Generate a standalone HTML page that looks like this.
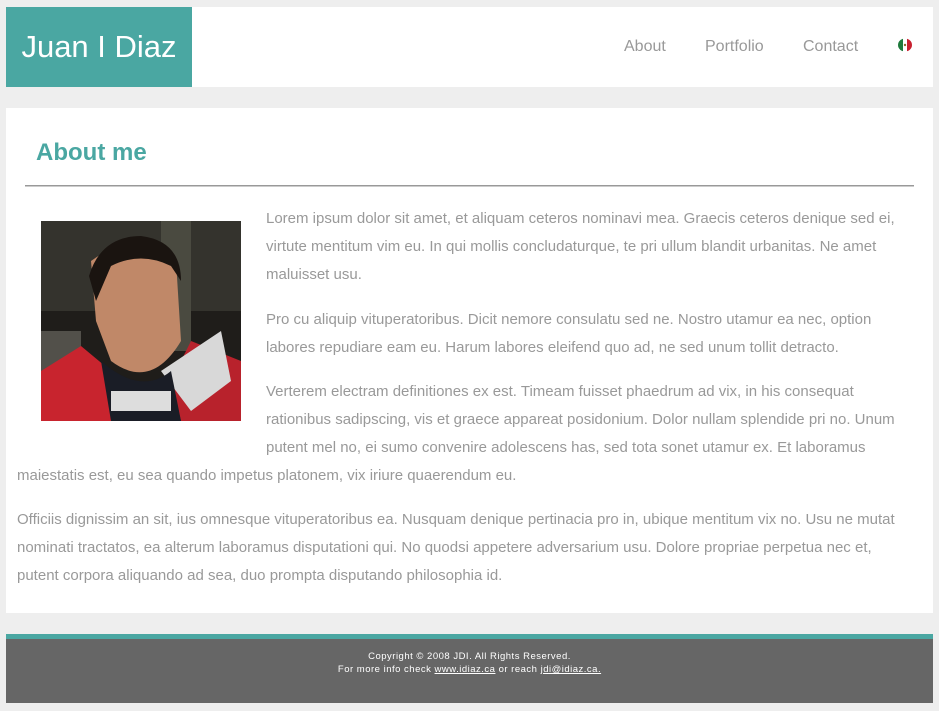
<!DOCTYPE html>
<html><head><meta charset="utf-8"><style>
body{margin:0;background:#eeeeee;width:939px;height:711px;position:relative;overflow:hidden;font-family:"Liberation Sans",Arial,sans-serif}
.a{position:absolute}
#hdr{left:6px;top:7px;width:927px;height:80px;background:#fff}
#logo{left:6px;top:7px;width:186px;height:80px;background:#4aa7a2;color:#fff;font-size:31px;line-height:80px;text-align:center}
.nav{top:38px;font-size:16px;color:#999;line-height:18px}
#main{left:6px;top:108px;width:927px;height:505px;background:#fff}
h1{position:absolute;left:36px;top:139px;margin:0;font-size:24px;color:#4aa7a2;line-height:28px}
#hr{left:25px;top:185px;width:889px;height:1px;background:#999;border-bottom:1px solid #ccc}
.l{position:absolute;font-size:15px;color:#999;white-space:nowrap;line-height:20px}
#bar{left:6px;top:634px;width:927px;height:5px;background:#4aa7a2}
#ft{left:6px;top:639px;width:927px;height:64px;background:#666;color:#fff;font-size:9.5px;text-align:center;letter-spacing:.5px}
#ft a{color:#fff;text-decoration:underline}
</style></head><body>
<div class="a" id="hdr"></div>
<div class="a" id="logo">Juan I Diaz</div>
<div class="a nav" style="left:624px">About</div>
<div class="a nav" style="left:705px">Portfolio</div>
<div class="a nav" style="left:803px">Contact</div>
<svg class="a" style="left:897px;top:38px" width="16" height="14" viewBox="0 0 16 14"><defs><clipPath id="c"><ellipse cx="8" cy="7" rx="7" ry="6.5"/></clipPath></defs><g clip-path="url(#c)"><rect x="0" y="0" width="6" height="14" fill="#1e7a3c"/><rect x="6" y="0" width="4" height="14" fill="#fff"/><rect x="10" y="0" width="6" height="14" fill="#c8202f"/><circle cx="8" cy="7" r="1.2" fill="#8a6a2a"/></g></svg>
<div class="a" id="main"></div>
<h1>About me</h1>
<div class="a" id="hr"></div>
<svg class="a" style="left:41px;top:221px" width="200" height="200" viewBox="0 0 200 200">
<rect width="200" height="200" fill="#1f1d1a"/>
<rect x="0" y="0" width="200" height="90" fill="#34332d"/>
<rect x="120" y="0" width="30" height="130" fill="#4a4a40"/>
<rect x="0" y="110" width="40" height="50" fill="#52504a"/>
<path d="M0 150 L40 125 L70 150 L80 200 L0 200Z" fill="#c8242e"/>
<path d="M200 140 L150 120 L130 160 L140 200 L200 200Z" fill="#b8222c"/>
<path d="M120 150 L180 110 L190 160 L150 190Z" fill="#d8d8d8"/>
<path d="M60 140 Q100 175 130 150 L140 200 L70 200Z" fill="#1a1d26"/>
<path d="M50 40 Q90 10 135 40 L140 120 Q110 170 70 140 L55 100Z" fill="#c08868"/>
<path d="M48 55 Q60 15 100 15 Q140 20 140 60 L130 45 Q100 30 70 45 L55 80Z" fill="#1a1410"/>
<rect x="70" y="170" width="60" height="20" fill="#ddd"/>
</svg>
<div class="l" style="left:266px;top:209px">Lorem ipsum dolor sit amet, et aliquam ceteros nominavi mea. Graecis ceteros denique sed ei,</div>
<div class="l" style="left:266px;top:237px">virtute mentitum vim eu. In qui mollis concludaturque, te pri ullum blandit urbanitas. Ne amet</div>
<div class="l" style="left:266px;top:265px">maluisset usu.</div>
<div class="l" style="left:266px;top:310px">Pro cu aliquip vituperatoribus. Dicit nemore consulatu sed ne. Nostro utamur ea nec, option</div>
<div class="l" style="left:266px;top:338px">labores repudiare eam eu. Harum labores eleifend quo ad, ne sed unum tollit detracto.</div>
<div class="l" style="left:266px;top:382px">Verterem electram definitiones ex est. Timeam fuisset phaedrum ad vix, in his consequat</div>
<div class="l" style="left:266px;top:410px">rationibus sadipscing, vis et graece appareat posidonium. Dolor nullam splendide pri no. Unum</div>
<div class="l" style="left:266px;top:438px">putent mel no, ei sumo convenire adolescens has, sed tota sonet utamur ex. Et laboramus</div>
<div class="l" style="left:17px;top:466px">maiestatis est, eu sea quando impetus platonem, vix iriure quaerendum eu.</div>
<div class="l" style="left:17px;top:510px">Officiis dignissim an sit, ius omnesque vituperatoribus ea. Nusquam denique pertinacia pro in, ubique mentitum vix no. Usu ne mutat</div>
<div class="l" style="left:17px;top:538px">nominati tractatos, ea alterum laboramus disputationi qui. No quodsi appetere adversarium usu. Dolore propriae perpetua nec et,</div>
<div class="l" style="left:17px;top:566px">putent corpora aliquando ad sea, duo prompta disputando philosophia id.</div>
<div class="a" id="bar"></div>
<div class="a" id="ft"><div style="margin-top:11px;line-height:13px">Copyright © 2008 JDI. All Rights Reserved.<br>For more info check <a>www.idiaz.ca</a> or reach <a>jdi@idiaz.ca.</a></div></div>
</body></html>
